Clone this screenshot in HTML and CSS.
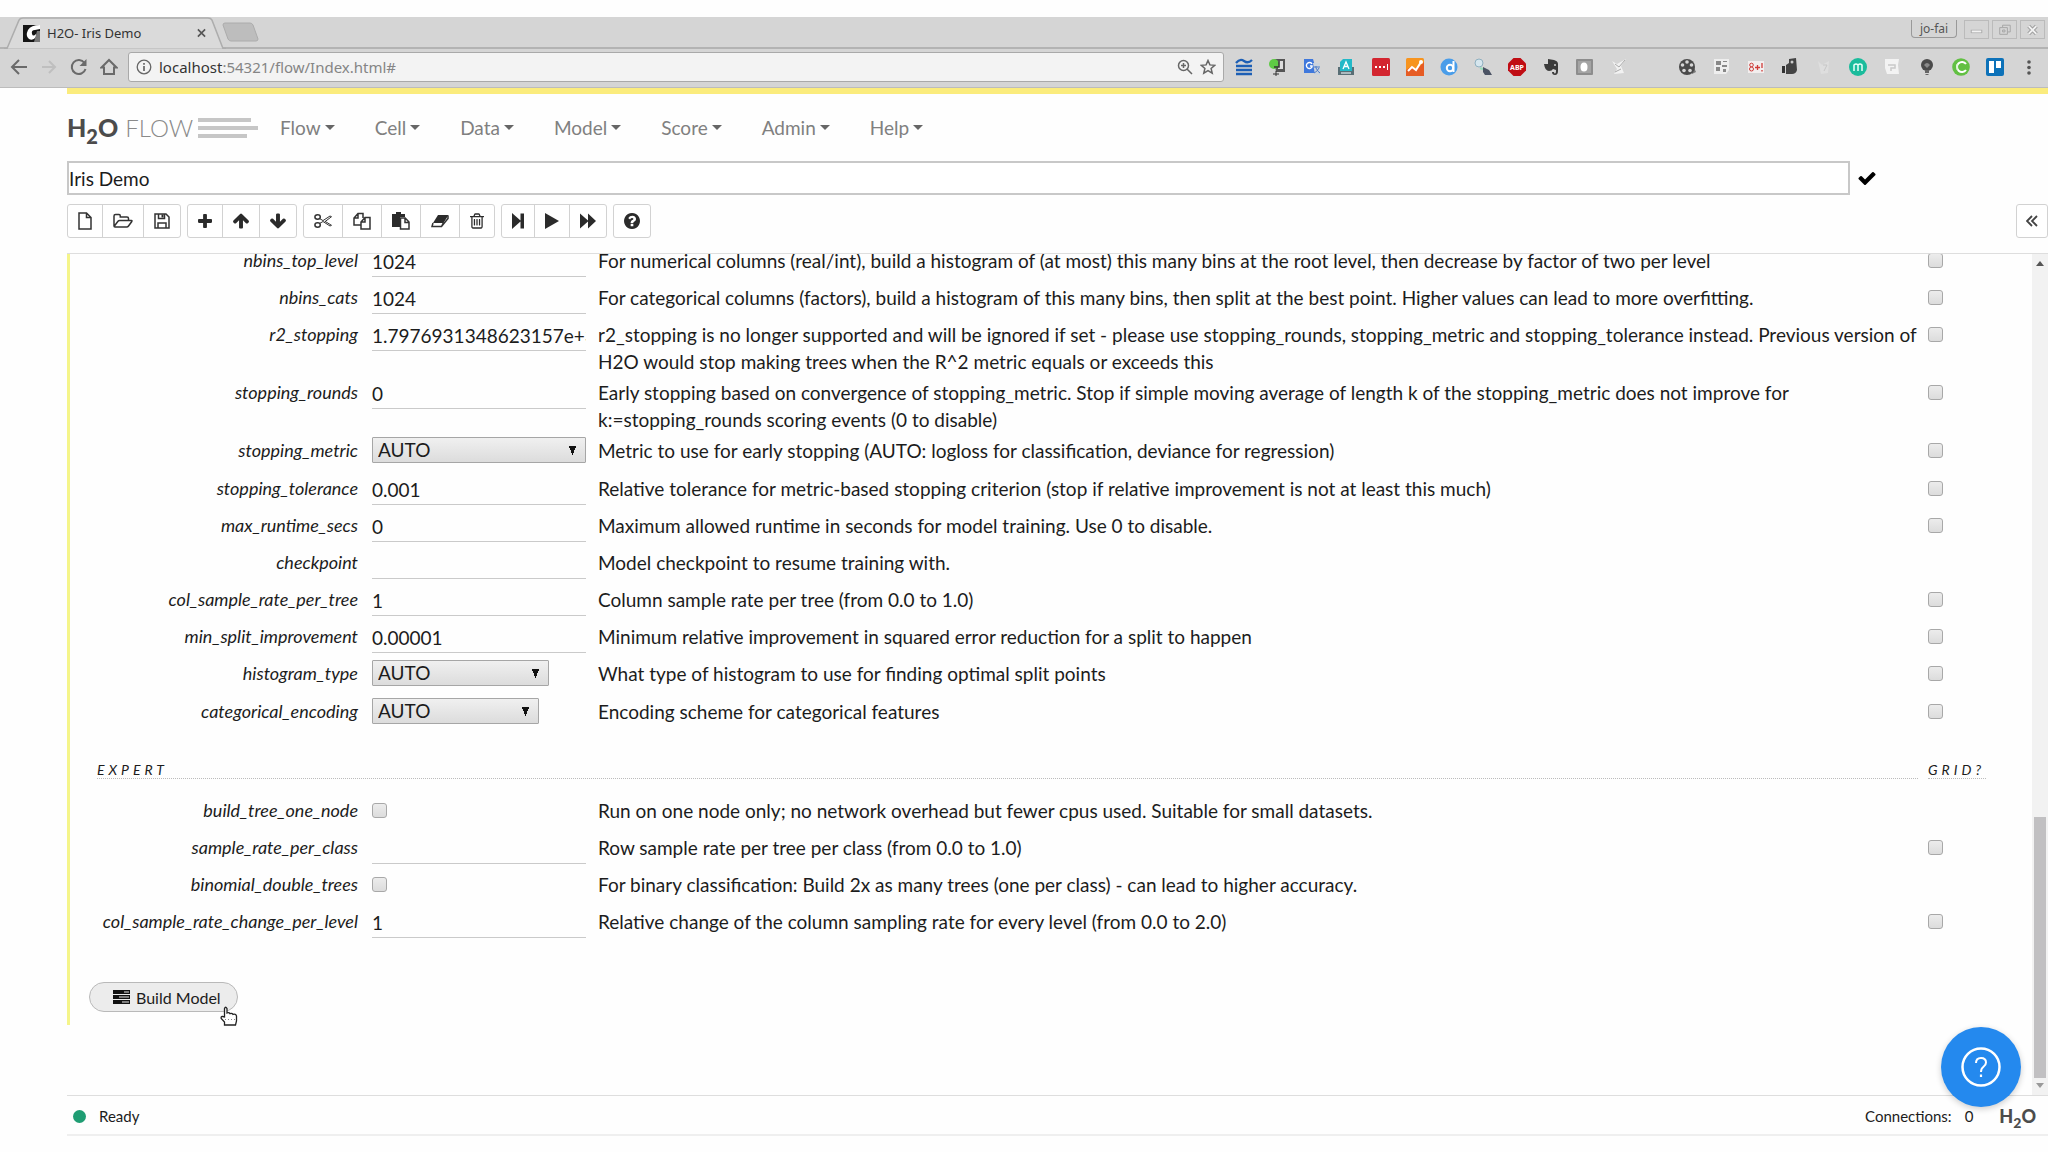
FILE: index.html
```html
<!DOCTYPE html>
<html lang="en">
<head>
<meta charset="utf-8">
<meta name="viewport" content="width=device-width, initial-scale=1">
<title>H2O- Iris Demo</title>
<link rel="stylesheet" href="styles.css">
</head>
<body>
<div class="browser">
  <div class="tab-strip">
    <div class="tab">
      <svg class="tab-shape" viewBox="0 0 222 31" preserveAspectRatio="none" aria-hidden="true"><path d="M0 30.500H3L15 3Q16 1 19 1H204Q207 1 208 3L219 30.500H222" fill="#dadada" stroke="#adadad" stroke-width="1.500"/></svg>
      <svg class="favicon" viewBox="0 0 17 17" aria-hidden="true"><rect width="17" height="17" fill="#141414"/><path d="M17 0Q8 0 5 5Q2 11 6 14Q10 16 13 12L13 9Q10 12 9 9Q8 5 12 5L17 4Z" fill="#fff"/><path d="M14 6h3v11h-6z" fill="#777"/></svg>
      <span class="tab-title">H2O- Iris Demo</span>
      <button class="tab-close" aria-label="Close tab"><svg viewBox="0 0 10 10"><path d="M1 1l8 8M9 1l-8 8" stroke="#555" stroke-width="1.800"/></svg></button>
    </div>
    <button class="new-tab" aria-label="New tab"><svg viewBox="0 0 37 20"><path d="M3 1H28Q30 1 31 3L36 17Q36 19 34 19H9Q7 19 6 17L1 3Q1 1 3 1Z" fill="#bdbdbd" stroke="#acacac"/></svg></button>
    <div class="window-controls">
      <button class="user-button">jo-fai</button>
      <button class="win-button" aria-label="Minimize"><svg viewBox="0 0 24 16"><path d="M6 9.500h12" stroke="#aaa" stroke-width="3.500"/><path d="M7 9.500h10" stroke="#f2f2f2" stroke-width="2"/></svg></button>
      <button class="win-button" aria-label="Restore"><svg viewBox="0 0 24 16" fill="none" stroke="#a5a5a5"><path d="M10 5V3h8v7h-3M7 5.500h8v7h-8zM10 8h2.500v2h-2.500z"/></svg></button>
      <button class="win-button" aria-label="Close"><svg viewBox="0 0 24 16"><path d="M8 4l8 8M16 4l-8 8" stroke="#a0a0a0" stroke-width="4"/><path d="M8 4l8 8M16 4l-8 8" stroke="#f2f2f2" stroke-width="2"/></svg></button>
    </div>
  </div>
  <div class="address-row">
    <button class="nav-button" aria-label="Back"><svg viewBox="0 0 18 18"><path d="M17 9H3M9 2L2 9l7 7" stroke="#6a6a6a"/></svg></button>
    <button class="nav-button" aria-label="Forward"><svg viewBox="0 0 18 18"><path d="M2 9h13M9 3l6 6-6 6" stroke="#bfbfbf"/></svg></button>
    <button class="nav-button" aria-label="Reload"><svg viewBox="0 0 18 18"><path d="M14.500 5A7 7 0 1 0 15.500 11" stroke="#6a6a6a"/><path d="M16.500 1v7h-7z" fill="#6a6a6a" stroke="none"/></svg></button>
    <button class="nav-button" aria-label="Home"><svg viewBox="0 0 18 18"><path d="M1.500 9.500L9 2l7.500 7.500H14V16H4V9.500z" stroke="#6a6a6a"/></svg></button>
    <div class="address-bar">
      <svg class="info-icon" viewBox="0 0 16 16" aria-hidden="true"><circle cx="8" cy="8" r="6.800" fill="none" stroke="#666" stroke-width="1.300"/><path d="M8 7v5M8 4v1.800" stroke="#666" stroke-width="1.700"/></svg>
      <div class="url"><b>localhost</b>:54321/flow/Index.html#</div>
      <svg class="bar-icon" viewBox="0 0 16 16" fill="none" stroke="#666" stroke-width="1.500" aria-hidden="true"><circle cx="6.500" cy="6.500" r="5"/><path d="M10 10l5 5M4 6.500h5M6.500 4v5"/></svg>
      <svg class="bar-icon" viewBox="0 0 16 16" fill="none" stroke="#666" stroke-width="1.500" aria-hidden="true"><path d="M8 1.500l1.900 4.400 4.800.4-3.600 3.200 1.100 4.700L8 11.700l-4.200 2.500 1.100-4.700L1.300 6.300l4.800-.4z"/></svg>
    </div>
    <div class="extensions" aria-hidden="true">
      <svg viewBox="0 0 18 18"><path d="M1 5q4-5 8-2t8-1" stroke="#1d5fb5" stroke-width="2.300" fill="none"/><path d="M1 8h16M1 12h16M1 16h16" stroke="#1d5fb5" stroke-width="2.300"/></svg>
      <svg viewBox="0 0 18 18"><path d="M5 1h11v13H7z" fill="#555"/><path d="M9 3h5v8h-5z" fill="#ddd"/><circle cx="5" cy="6" r="5" fill="#5ecb45"/><path d="M5 9h5V3" stroke="#333" stroke-width="1.500" fill="none"/><path d="M4 16h6M7 13v5" stroke="#333"/></svg>
      <svg viewBox="0 0 18 18"><path d="M1 1h9l4 14H1z" fill="#3f78dc"/><path d="M10 5h7v12h-5z" fill="#ccd3dc"/><path d="M9 6A3 3 0 1 0 9 9V8H7" stroke="#fff" stroke-width="1.400" fill="none"/><path d="M10 9h7M13 8v2q2 4 4 5M16 10q-2 4-5 5" stroke="#4c7cc8" fill="none"/></svg>
      <svg viewBox="0 0 18 18"><path d="M1 9h16v8H1z" fill="#596e75"/><path d="M3 4l3-3h9v12H3z" fill="#22b9c8"/><path d="M6 11l3-7 3 7M7 8.500h4" stroke="#fff" stroke-width="1.300" fill="none"/><path d="M4 15h10" stroke="#c8d4d8" stroke-width="1.500"/></svg>
      <svg viewBox="0 0 18 18"><rect width="18" height="18" rx="1.500" fill="#d32630"/><path d="M3 8h2v2H3zM7 8h2v2H7zM11 8h2v2h-2zM15 6h1v6h-1z" fill="#fff"/></svg>
      <svg viewBox="0 0 18 18"><rect width="18" height="18" rx="1.500" fill="#f7941e"/><path d="M0 12l6-4 4 4 8-8v14H0z" fill="#e65c24"/><path d="M2 13l4-4 4 3 5-8" stroke="#fff" stroke-width="2" fill="none"/><circle cx="15" cy="4" r="2" fill="#fff"/></svg>
      <svg viewBox="0 0 18 18"><circle cx="9" cy="9" r="8.500" fill="#4a9de9"/><circle cx="10" cy="10" r="3.200" fill="none" stroke="#fff" stroke-width="2"/><path d="M13.500 3v11" stroke="#fff" stroke-width="2"/></svg>
      <svg viewBox="0 0 18 18"><circle cx="5" cy="5" r="4" fill="#d6e6ee" stroke="#8fb0c0"/><path d="M6 10l5 2" stroke="#9db" stroke-width="2"/><path d="M9 9l6 3 3 5h-7l-2-3z" fill="#4b5364"/></svg>
      <svg viewBox="0 0 18 18"><path d="M5.500 0h7L18 5.500v7L12.500 18h-7L0 12.500v-7z" fill="#c00d14"/><text x="9" y="12" text-anchor="middle" class="abp">ABP</text></svg>
      <svg viewBox="0 0 18 18"><path d="M6 1l6 1q4 1 4 4v7q0 4-3 4t-3-3h2q0 1.500 1 1.500T14 12l-3-1q-1 2-4 2-4 0-5-7h4z" fill="#3b3b3b"/><circle cx="13" cy="7" r="1" fill="#ccc"/></svg>
      <svg viewBox="0 0 18 18"><rect y="1" width="17" height="16" rx="1" fill="#8d8d8d"/><rect x="2" y="3" width="13" height="12" fill="#a4a4a4"/><ellipse cx="8" cy="9" rx="3.500" ry="4.500" fill="#fff"/></svg>
      <svg viewBox="0 0 18 18"><path d="M2 3l5 3 9-5-5 7 3 7-10 1 3-5z" fill="#f2f2f2"/><path d="M5 6l4 3 6-7M5 14l6-3" stroke="#aaa" fill="none"/></svg>
      <svg viewBox="0 0 18 18"></svg>
      <svg viewBox="0 0 18 18"><path d="M12 3l5 11-4 2z" fill="#777"/><circle cx="8" cy="9" r="8" fill="#4a4a4a"/><g fill="#d6d6d6"><circle cx="8" cy="4" r="1.800"/><circle cx="12.500" cy="7" r="1.800"/><circle cx="11" cy="12.500" r="1.800"/><circle cx="5" cy="12.500" r="1.800"/><circle cx="3.500" cy="7" r="1.800"/></g></svg>
      <svg viewBox="0 0 18 18"><path d="M1 1h15v11l-3 4H1z" fill="#eee"/><path d="M3 3h5v4H3zM10 3h4v1h-4zM3 9h4v4H3zM9 7h5v2H9zM10 11h3v3h-3z" fill="#888"/></svg>
      <svg viewBox="0 0 18 18"><rect x="1" y="3" width="16" height="12" fill="#f2eeee"/><circle cx="4.500" cy="7" r="1.800" fill="none" stroke="#cf3c39"/><circle cx="4.500" cy="11" r="2" fill="none" stroke="#cf3c39"/><path d="M10.500 7v5M8 9.500h5M15 5v5M15 12v1.500" stroke="#cf3c39" stroke-width="1.300" fill="none"/></svg>
      <svg viewBox="0 0 18 18"><path d="M8 1l7-1 1 12q-1 4-5 4H5V7l3-2z" fill="#444"/><path d="M1 8h3v7H1z" fill="#333"/><circle cx="11" cy="4" r="1.500" fill="#ccc"/></svg>
      <svg viewBox="0 0 18 18"><path d="M3 3l4 4 7-4-1 12-7 1z" fill="#dedede"/><path d="M8 7h4l-3 6" stroke="#c6c6c6" fill="none"/></svg>
      <svg viewBox="0 0 18 18"><circle cx="9" cy="9" r="9" fill="#1abc9c"/><path d="M5 13V7q2-2 4 0v6M9 7q2-2 4 0v6" stroke="#e8fff9" stroke-width="1.500" fill="none"/></svg>
      <svg viewBox="0 0 18 18"><path d="M2 1h14l-1 6 1 9H4L2 10z" fill="#f3f3f3"/><path d="M5 7h7v3h-4v3" stroke="#c9c9c9" stroke-width="1.500" fill="none"/></svg>
      <svg viewBox="0 0 18 18"><circle cx="9" cy="7" r="6" fill="#4b4b4b"/><path d="M7 12h4v3H7zM7.500 16h3v1h-3z" fill="#666"/><path d="M6 7q3-4 6 0l-3 3z" fill="#8a8a8a"/></svg>
      <svg viewBox="0 0 18 18"><circle cx="9" cy="9" r="8.800" fill="#62c043"/><path d="M14 6A5 5 0 1 0 14 12" stroke="#fff" stroke-width="2" fill="none"/><path d="M5 6v6" stroke="#c7edba"/></svg>
      <svg viewBox="0 0 18 18"><rect width="18" height="18" rx="2" fill="#0d72b9"/><path d="M3 3h5v12H3zM10 3h5v7h-5z" fill="#fff"/></svg>
      <svg viewBox="0 0 18 18" fill="#555"><circle cx="9" cy="4" r="1.800"/><circle cx="9" cy="9.500" r="1.800"/><circle cx="9" cy="15" r="1.800"/></svg>
    </div>
  </div>
</div>

<div class="app">
  <header class="header">
    <a class="logo" href="#"><span class="h2o">H<sub>2</sub>O</span><span class="flow-word">FLOW</span><svg viewBox="0 0 60 22" aria-hidden="true"><path d="M0 3h53M0 11h60M0 19h49" stroke="#c6c6c6" stroke-width="4"/></svg></a>
    <nav class="menu">
      <button>Flow</button>
      <button>Cell</button>
      <button>Data</button>
      <button>Model</button>
      <button>Score</button>
      <button>Admin</button>
      <button>Help</button>
    </nav>
  </header>
  <div class="title-row">
    <input class="title-input" type="text" value="Iris Demo" aria-label="Flow title">
    <button class="confirm" aria-label="Rename"><svg viewBox="120 250 1552 1272"><path d="M1671 566q0 40-28 68l-724 724-136 136q-28 28-68 28t-68-28l-136-136-362-362q-28-28-28-68t28-68l136-136q28-28 68-28t68 28l294 295 656-657q28-28 68-28t68 28l136 136q28 28 28 68z"/></svg></button>
  </div>
  <div class="toolbar">
    <div class="group">
      <button aria-label="New"><svg class="w14" viewBox="0 0 14 18"><path class="line" d="M1 1h7.500L13 5.500V17H1zM8.500 1v4.500H13"/></svg></button>
      <button aria-label="Open"><svg class="w20" viewBox="0 0 20 18"><path class="line" d="M1 14V4q0-1.500 1.500-1.500H6Q7.300 2.500 7.300 4v1H14q1.500 0 1.500 1.500V8.500M1 14.500L5 9.300Q5.600 8.500 6.600 8.500H18.500q.8.100.3 1L15.500 14q-.7 1-1.800 1H2Q1 15 1 14"/></svg></button>
      <button aria-label="Save"><svg class="w16" viewBox="0 0 16 18"><path class="line" d="M1 2h11l3 3v11H1zM4 16v-5h8v5M4.500 2v4.500h6V2"/><path d="M7.500 2.500h2v3h-2z"/></svg></button>
    </div>
    <div class="group">
      <button aria-label="Insert cell"><svg class="w14" viewBox="190 128 1410 1410"><path d="M1600 736v192q0 40-28 68t-68 28h-416v416q0 40-28 68t-68 28h-192q-40 0-68-28t-28-68v-416h-416q-40 0-68-28t-28-68v-192q0-40 28-68t68-28h416v-416q0-40 28-68t68-28h192q40 0 68 28t28 68v416h416q40 0 68 28t28 68z"/></svg></button>
      <button aria-label="Move up"><svg class="w16" viewBox="110 170 1570 1500"><path id="arrow" d="M1675 971q0 51-37 90l-75 75q-38 38-91 38-54 0-90-38l-294-293v704q0 52-37.500 84.500t-90.500 32.500h-128q-53 0-90.500-32.500t-37.500-84.500v-704l-294 293q-36 38-90 38t-90-38l-75-75q-38-38-38-90 0-53 38-91l651-651q35-37 90-37 54 0 91 37l651 651q37 39 37 91z"/></svg></button>
      <button aria-label="Move down"><svg class="w16 flip" viewBox="110 170 1570 1500"><use href="#arrow"/></svg></button>
    </div>
    <div class="group">
      <button aria-label="Cut"><svg class="w18" viewBox="0 0 18 18"><g fill="none" stroke="#333" stroke-width="1.500"><ellipse cx="3.600" cy="5" rx="2.700" ry="2.200"/><ellipse cx="3.600" cy="13" rx="2.700" ry="2.200"/></g><path d="M5.500 6.500L9 8.600 16 4l1.500.7L10.500 10M5.500 11.500L9 9.500l7 4.500 1.500-.7L11 9.300" fill="none" stroke="#333"/></svg></button>
      <button aria-label="Copy"><svg class="w18" viewBox="0 0 18 18"><path class="line" d="M8 13H1V6l4-4.500h5V6M5 1.500V6H1M12 5.500h5V17H8v-7zM12 5.500V10H8"/></svg></button>
      <button aria-label="Paste"><svg class="w18" viewBox="0 0 18 18"><path d="M0 2h4V0h5v2h4v3H8v10H0z"/><path class="line" d="M8.500 6h4.700L17 10v7H8.500zM13 6v4.500h4"/></svg></button>
      <button aria-label="Clear"><svg class="w18" viewBox="0 0 18 18"><path d="M7 3h10.500L12.500 11H2z"/><path class="line" d="M2 11l-1 3.500h9.500l6.500-8V3.500M12.500 10.500l-2 4"/></svg></button>
      <button aria-label="Delete"><svg class="w14" viewBox="192 128 1408 1536"><path d="M704 736v576q0 14-9 23t-23 9h-64q-14 0-23-9t-9-23v-576q0-14 9-23t23-9h64q14 0 23 9t9 23zm256 0v576q0 14-9 23t-23 9h-64q-14 0-23-9t-9-23v-576q0-14 9-23t23-9h64q14 0 23 9t9 23zm256 0v576q0 14-9 23t-23 9h-64q-14 0-23-9t-9-23v-576q0-14 9-23t23-9h64q14 0 23 9t9 23zm128 724v-948h-896v948q0 22 7 40.500t14.500 27 10.500 8.500h832q3 0 10.500-8.500t14.500-27 7-40.500zm-672-1076h448l-48-117q-7-9-17-11h-317q-10 2-17 11zm928 32v64q0 14-9 23t-23 9h-96v948q0 83-47 143.500t-113 60.500h-832q-66 0-113-58.500t-47-141.500v-952h-96q-14 0-23-9t-9-23v-64q0-14 9-23t23-9h309l70-167q15-37 54-63t79-26h320q40 0 79 26t54 63l70 167h309q14 0 23 9t9 23z"/></svg></button>
    </div>
    <div class="group">
      <button aria-label="Run and advance"><svg class="w12" viewBox="0 0 12 18"><path d="M0 1l8.500 7.500V1.500H12v15H8.500V9.500L0 17z"/></svg></button>
      <button aria-label="Run"><svg class="w14" viewBox="0 0 14 18"><path d="M0 1l14 8-14 8z"/></svg></button>
      <button aria-label="Run all"><svg class="w16" viewBox="0 0 16 18"><path d="M0 1.500l8 7v-7l8 7.500-8 7.500v-7l-8 7z"/></svg></button>
    </div>
    <div class="group">
      <button aria-label="Help"><svg class="w16" viewBox="128 128 1536 1536"><path d="M1024 1376v-192q0-14-9-23t-23-9h-192q-14 0-23 9t-9 23v192q0 14 9 23t23 9h192q14 0 23-9t9-23zm256-672q0-88-55.500-163t-138.500-116-170-41q-243 0-371 213-15 24 8 42l132 100q7 6 19 6 16 0 25-12 53-68 86-92 34-24 86-24 48 0 85.500 26t37.500 59q0 38-20 61t-68 45q-63 28-115.500 86.500t-52.500 125.500v36q0 14 9 23t23 9h192q14 0 23-9t9-23q0-19 21.500-49.500t54.500-49.500q32-18 49-28.500t46-35 44.500-48 28-60.500 12.500-81zm384 192q0 209-103 385.500t-279.500 279.500-385.500 103-385.500-103-279.500-279.500-103-385.500 103-385.500 279.500-279.500 385.500-103 385.500 103 279.500 279.500 103 385.500z"/></svg></button>
    </div>
    <button class="sidebar-toggle" aria-label="Show sidebar"><svg class="w12" viewBox="0 0 12 18"><path d="M6 4L1 9l5 5M11 4L6 9l5 5" fill="none" stroke="#444" stroke-width="1.800"/></svg></button>
  </div>

  <main class="notebook">
    <div class="scroll-area">
      <form class="cell" onsubmit="return false">
        <div class="row"><label for="nbins_top_level">nbins_top_level</label><div><input type="text" id="nbins_top_level" value="1024"></div><p>For numerical columns (real/int), build a histogram of (at most) this many bins at the root level, then decrease by factor of two per level</p><input type="checkbox" aria-label="Grid nbins_top_level"></div>
        <div class="row"><label for="nbins_cats">nbins_cats</label><div><input type="text" id="nbins_cats" value="1024"></div><p>For categorical columns (factors), build a histogram of this many bins, then split at the best point. Higher values can lead to more overfitting.</p><input type="checkbox" aria-label="Grid nbins_cats"></div>
        <div class="row"><label for="r2_stopping">r2_stopping</label><div><input type="text" id="r2_stopping" value="1.7976931348623157e+308"></div><p>r2_stopping is no longer supported and will be ignored if set - please use stopping_rounds, stopping_metric and stopping_tolerance instead. Previous version of H2O would stop making trees when the R^2 metric equals or exceeds this</p><input type="checkbox" aria-label="Grid r2_stopping"></div>
        <div class="row"><label for="stopping_rounds">stopping_rounds</label><div><input type="text" id="stopping_rounds" value="0"></div><p>Early stopping based on convergence of stopping_metric. Stop if simple moving average of length k of the stopping_metric does not improve for k:=stopping_rounds scoring events (0 to disable)</p><input type="checkbox" aria-label="Grid stopping_rounds"></div>
        <div class="row select-row"><label for="stopping_metric">stopping_metric</label><div><select id="stopping_metric"><option>AUTO</option></select></div><p>Metric to use for early stopping (AUTO: logloss for classification, deviance for regression)</p><input type="checkbox" aria-label="Grid stopping_metric"></div>
        <div class="row"><label for="stopping_tolerance">stopping_tolerance</label><div><input type="text" id="stopping_tolerance" value="0.001"></div><p>Relative tolerance for metric-based stopping criterion (stop if relative improvement is not at least this much)</p><input type="checkbox" aria-label="Grid stopping_tolerance"></div>
        <div class="row"><label for="max_runtime_secs">max_runtime_secs</label><div><input type="text" id="max_runtime_secs" value="0"></div><p>Maximum allowed runtime in seconds for model training. Use 0 to disable.</p><input type="checkbox" aria-label="Grid max_runtime_secs"></div>
        <div class="row"><label for="checkpoint">checkpoint</label><div><input type="text" id="checkpoint"></div><p>Model checkpoint to resume training with.</p></div>
        <div class="row"><label for="col_sample_rate_per_tree">col_sample_rate_per_tree</label><div><input type="text" id="col_sample_rate_per_tree" value="1"></div><p>Column sample rate per tree (from 0.0 to 1.0)</p><input type="checkbox" aria-label="Grid col_sample_rate_per_tree"></div>
        <div class="row"><label for="min_split_improvement">min_split_improvement</label><div><input type="text" id="min_split_improvement" value="0.00001"></div><p>Minimum relative improvement in squared error reduction for a split to happen</p><input type="checkbox" aria-label="Grid min_split_improvement"></div>
        <div class="row select-row"><label for="histogram_type">histogram_type</label><div><select id="histogram_type" class="medium"><option>AUTO</option></select></div><p>What type of histogram to use for finding optimal split points</p><input type="checkbox" aria-label="Grid histogram_type"></div>
        <div class="row select-row"><label for="categorical_encoding">categorical_encoding</label><div><select id="categorical_encoding" class="narrow"><option>AUTO</option></select></div><p>Encoding scheme for categorical features</p><input type="checkbox" aria-label="Grid categorical_encoding"></div>
        <div class="section-head"><h2>EXPERT</h2><span>GRID?</span></div>
        <div class="row"><label for="build_tree_one_node">build_tree_one_node</label><div><input type="checkbox" id="build_tree_one_node"></div><p>Run on one node only; no network overhead but fewer cpus used. Suitable for small datasets.</p></div>
        <div class="row"><label for="sample_rate_per_class">sample_rate_per_class</label><div><input type="text" id="sample_rate_per_class"></div><p>Row sample rate per tree per class (from 0.0 to 1.0)</p><input type="checkbox" aria-label="Grid sample_rate_per_class"></div>
        <div class="row"><label for="binomial_double_trees">binomial_double_trees</label><div><input type="checkbox" id="binomial_double_trees"></div><p>For binary classification: Build 2x as many trees (one per class) - can lead to higher accuracy.</p></div>
        <div class="row"><label for="col_sample_rate_change_per_level">col_sample_rate_change_per_level</label><div><input type="text" id="col_sample_rate_change_per_level" value="1"></div><p>Relative change of the column sampling rate for every level (from 0.0 to 2.0)</p><input type="checkbox" aria-label="Grid col_sample_rate_change_per_level"></div>
        <div class="actions">
          <button class="build"><svg viewBox="0 0 17 14" aria-hidden="true"><path d="M0 0h17v4H0zM0 5h17v4H0zM0 10h17v4H0z" fill="#111"/><path d="M11 1.500h5v1h-5zM6 6.500h10v1H6zM9 11.500h7v1H9z" fill="#e8e8e8"/></svg>Build Model</button>
          <svg class="pointer" viewBox="0 0 18 20" aria-hidden="true"><path d="M4.500 11V2.500Q5.500 0 7 2.500V7q2-1 3 .6 2-.8 3 .8 2.800-.8 3.500 1.600V15l-1 4h-11v-3L1.200 12.500q-.4-2.300 1.300-2z" fill="#fff" stroke="#222" stroke-width="1.300"/><path d="M5 13.500h10" stroke="#888" stroke-dasharray="1 2"/></svg>
        </div>
      </form>
    </div>
    <div class="scrollbar" aria-hidden="true">
      <svg viewBox="0 0 8 5"><path d="M0 5l4-5 4 5z" fill="#555"/></svg>
      <span class="thumb"></span>
      <svg viewBox="0 0 8 5"><path d="M0 0h8L4 5z" fill="#999"/></svg>
    </div>
  </main>
  <footer class="status">
    <span class="dot"></span><span>Ready</span>
    <span class="connections">Connections:</span><span>0</span>
    <span class="h2o small">H<sub>2</sub>O</span>
  </footer>
</div>
<button class="help-fab" aria-label="Support"><svg viewBox="0 0 40 40" fill="none" stroke="#fff"><circle cx="20" cy="20" r="18.500" stroke-width="2.500"/><path d="M15 16q0-5 5-5t5 4.500q0 2.500-2.500 4.300Q20 21.600 20 25" stroke-width="2"/><path d="M20 27.500v2.500" stroke-width="2.200"/></svg></button>
</body>
</html>
```
FILE: styles.css
```css
* { box-sizing: border-box; }

body {
  margin: 0;
  padding: 17px 0 18px;
  height: 100vh;
  display: flex;
  flex-direction: column;
  overflow: hidden;
  background: #fefefe;
  color: #1c1c1c;
  font: 19px/27px Lato, "Liberation Sans", sans-serif;
}

button, input, select { font: inherit; color: inherit; margin: 0; }
button { padding: 0; border: 0; background: none; }
svg { display: block; flex: none; }
p, h2 { margin: 0; }

/* Browser frame */
.browser {
  background: #d5d5d5;
  border-bottom: 1px solid #bcbcbc;
  font-family: "Noto Sans", sans-serif;
}

.tab-strip {
  display: flex;
  height: 32px;
  padding: 0 3px 0 4px;
  border-bottom: 2px solid #b3b3b3;
}

.tab {
  position: relative;
  display: flex;
  align-items: center;
  width: 222px;
  height: 32px;
  padding: 0 20px 0 19px;
}

.tab-shape { position: absolute; inset: 0; width: 100%; height: 100%; }
.favicon { position: relative; width: 17px; height: 17px; }

.tab-title {
  position: relative;
  margin-left: 7px;
  color: #333;
  font-size: 13px;
}

.tab-close { position: relative; margin-left: auto; }
.tab-close svg { width: 9px; height: 10px; }
.new-tab { align-self: center; margin-left: -4px; }
.new-tab svg { width: 37px; height: 20px; }

.window-controls {
  display: flex;
  gap: 3px;
  margin-left: auto;
  padding-top: 3px;
}

.user-button {
  width: 46px;
  height: 18px;
  margin-right: 4px;
  border: 1px solid #999;
  border-top: 0;
  border-radius: 0 0 4px 4px;
  color: #555;
  font-size: 12px;
  line-height: 17px;
}

.win-button { width: 25px; height: 19px; border: 1px solid #bbb; }
.win-button svg { width: 23px; height: 16px; }

.address-row {
  display: flex;
  align-items: center;
  height: 38px;
  padding: 0 10px 2px;
}

.nav-button { width: 18px; margin-right: 12px; }
.nav-button svg { width: 18px; height: 18px; fill: none; stroke-width: 2; }

.address-bar {
  flex: 1;
  display: flex;
  align-items: center;
  gap: 7px;
  height: 30px;
  margin: 0 11px 0 -2px;
  padding: 0 7px;
  border: 1px solid #a9a9a9;
  border-radius: 3px;
  background: #f3f3f3;
}

.info-icon { width: 16px; height: 16px; }
.url { flex: 1; color: #858585; font-size: 15px; }
.url b { color: #333; font-weight: 400; }
.bar-icon { width: 16px; height: 16px; }

.extensions { display: flex; justify-content: space-between; width: 803px; }
.extensions svg { width: 18px; height: 18px; }
.abp { font: bold 7px "Noto Sans", sans-serif; fill: #fff; }

/* Application */
.app { flex: 1; min-height: 0; display: flex; flex-direction: column; }

.header {
  display: flex;
  align-items: center;
  height: 73px;
  margin-left: 67px;
  border-top: 6px solid #fbec7d;
}

.logo {
  display: flex;
  align-items: center;
  width: 213px;
  color: #8a8a8a;
  font-size: 25px;
  text-decoration: none;
}

.h2o { color: #4c4c4c; font-weight: 900; }
.h2o sub { font-size: 20px; line-height: 1px; vertical-align: -7px; }
.flow-word { margin-left: 7px; font-size: 24px; font-weight: 300; }
.logo svg { width: 60px; height: 22px; margin-left: 5px; }

.menu { display: flex; gap: 40px; }

.menu button {
  display: flex;
  align-items: center;
  gap: 4px;
  color: #808080;
}

.menu button::after {
  content: "";
  border: 5px solid transparent;
  border-top-color: #666;
  border-bottom: 0;
}

.title-row {
  display: flex;
  align-items: center;
  gap: 8px;
  margin: 0 172px 0 67px;
}

.title-input {
  flex: 1;
  height: 34px;
  padding: 0;
  border: 2px solid #c8c8c8;
  background: #fff;
}

.confirm svg { width: 18px; height: 14px; }

.toolbar { display: flex; gap: 6px; margin: 9px 0 15px 67px; }

.group, .sidebar-toggle {
  display: flex;
  height: 34px;
  border: 1px solid #d2d2d2;
  border-radius: 3px;
  background: #fff;
}

.group button { display: flex; align-items: center; padding: 0 10px; }
.group button + button { border-left: 1px solid #d2d2d2; }
.group svg { height: 18px; fill: #2b2b2b; }
.w12 { width: 12px; }
.w14 { width: 14px; }
.w16 { width: 16px; }
.w18 { width: 18px; }
.w20 { width: 20px; }
.flip { transform: rotate(180deg); }
.line { fill: none; stroke: #333; stroke-width: 1.5; }

.sidebar-toggle {
  align-items: center;
  margin-left: auto;
  padding: 0 9px;
}

.notebook {
  flex: 1;
  min-height: 0;
  display: flex;
  margin-left: 67px;
  border-top: 1px solid #dedede;
}

.scroll-area { flex: 1; overflow: hidden; }

.cell {
  margin-top: -7px;
  padding: 0 46px 13px 27px;
  border-left: 3px solid #f5f58a;
}

.row, .section-head {
  display: grid;
  grid-template-columns: 275px 226px 1fr 58px;
}

.row { padding-bottom: 4px; min-height: 37px; }
.select-row { min-height: 38px; }

.row label {
  padding-right: 14px;
  font-size: 18px;
  font-style: italic;
  text-align: right;
  white-space: nowrap;
}

.row p { padding-right: 6px; }

input[type="text"] { display: block; border-radius: 0; outline: 0; }

.row input[type="text"] {
  width: 214px;
  height: 30px;
  padding: 0;
  border: 0;
  border-bottom: 1px solid #cacaca;
  background: none;
}

input[type="checkbox"] {
  display: block;
  appearance: none;
  width: 15px;
  height: 15px;
  margin-top: 6px;
  border: 1px solid #a8a8a8;
  border-radius: 3px;
  background: linear-gradient(#ececec, #dcdcdc);
}

select {
  display: block;
  appearance: none;
  width: 214px;
  height: 26px;
  padding: 0 5px;
  border: 1px solid #a6a6a6;
  border-radius: 1px;
  background:
    conic-gradient(from -22deg at 50% 100%, #111 44deg, transparent 0) right 9px top 8px / 7px 9px no-repeat,
    linear-gradient(#f0f0f0, #dcdcdc);
  line-height: 24px;
}

.medium { width: 177px; }
.narrow { width: 167px; }

.section-head {
  grid-template-columns: 1fr 58px;
  gap: 10px;
  margin: 25px 0 18px;
  line-height: 17px;
  letter-spacing: 4px;
}

.section-head h2, .section-head span {
  border-bottom: 1px dotted #bbb;
  font-size: 14px;
  font-style: italic;
  font-weight: 400;
}

.actions { position: relative; margin: 37px 0 0 -8px; }

.build {
  display: flex;
  align-items: center;
  gap: 6px;
  height: 30px;
  padding: 0 16px 0 23px;
  border: 1px solid #b9b9b9;
  border-radius: 15px;
  background: #ececec;
  font-size: 16px;
}

.build svg { width: 17px; height: 14px; }
.pointer { position: absolute; left: 131px; top: 24px; width: 18px; height: 20px; }

.scrollbar {
  display: flex;
  flex-direction: column;
  align-items: center;
  width: 16px;
  padding: 7px 0;
  background: #f2f2f2;
}

.scrollbar svg { width: 8px; height: 5px; }
.thumb { width: 12px; height: 261px; margin: auto 0 5px; background: #c1c0c2; }

.status {
  display: flex;
  align-items: center;
  gap: 13px;
  height: 39px;
  margin-left: 67px;
  padding: 2px 12px 0 6px;
  border-top: 1px solid #dedede;
  box-shadow: 0 2px 0 #efefef;
  font-size: 15px;
}

.dot { width: 13px; height: 13px; border-radius: 50%; background: #1f9d73; }
.connections { margin-left: auto; }
.small { margin-left: 13px; font-size: 18px; }
.small sub { font-size: 14px; vertical-align: -5px; }

.help-fab {
  position: fixed;
  right: 27px;
  bottom: 45px;
  display: flex;
  align-items: center;
  justify-content: center;
  width: 80px;
  height: 80px;
  border-radius: 50%;
  background: #2489ee;
  box-shadow: 0 2px 6px #0003;
}

.help-fab svg { width: 40px; height: 40px; }
```
